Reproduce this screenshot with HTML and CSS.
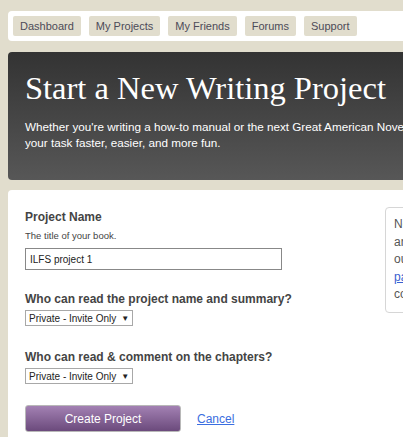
FILE: index.html
```html
<!DOCTYPE html>
<html>
<head>
<meta charset="utf-8">
<link rel="stylesheet" href="styles.css">
</head>
<body>
<div class="page">
  <nav class="nav">
    <a class="nav-btn" href="#">Dashboard</a>
    <a class="nav-btn" href="#">My Projects</a>
    <a class="nav-btn" href="#">My Friends</a>
    <a class="nav-btn" href="#">Forums</a>
    <a class="nav-btn" href="#">Support</a>
  </nav>
  <header class="hero">
    <h1 class="hero-title">Start a New Writing Project</h1>
    <p class="hero-text">Whether you're writing a how-to manual or the next Great American Novel, we'll help make<br>your task faster, easier, and more fun.</p>
  </header>
  <main class="panel">
    <form class="form">
      <div class="field">
        <label class="label">Project Name</label>
        <div class="hint">The title of your book.</div>
        <input class="text-input" type="text" value="ILFS project 1">
      </div>
      <div class="field field-select">
        <label class="label">Who can read the project name and summary?</label>
        <div class="select"><span>Private - Invite Only</span><span class="arrow">&#9660;</span></div>
      </div>
      <div class="field field-select">
        <label class="label">Who can read &amp; comment on the chapters?</label>
        <div class="select"><span>Private - Invite Only</span><span class="arrow">&#9660;</span></div>
      </div>
      <div class="actions">
        <button class="btn" type="button">Create Project</button>
        <a class="cancel" href="#">Cancel</a>
      </div>
    </form>
    <aside class="aside">
      New projects are private by default<br>
      and only the people you invite can<br>
      out who can see your work on the<br>
      <a class="aside-link" href="#">page settings</a> for each project<br>
      control it later.
    </aside>
  </main>
</div>
</body>
</html>
```
FILE: styles.css
```css
html, body {
  margin: 0;
  padding: 0;
  overflow: hidden;
}
body {
  background: #e1ddcd;
  font-family: "Liberation Sans", Arial, sans-serif;
  color: #444;
}
.page {
  width: 960px;
  padding: 11px 0 0 8px;
}
.nav {
  display: flex;
  gap: 8px;
  height: 30px;
  box-sizing: border-box;
  padding: 5px 5px;
  background: #fff;
  border-radius: 4px 0 0 4px;
}
.nav-btn {
  display: flex;
  align-items: center;
  height: 20px;
  padding: 0 7px;
  background: #e1ddcd;
  border-radius: 2px;
  color: #4d4b58;
  font-size: 11px;
  text-decoration: none;
}
.hero {
  margin-top: 11px;
  height: 128px;
  box-sizing: border-box;
  padding: 17px 0 0 17px;
  background: linear-gradient(#333333, #575757);
  border-radius: 4px 0 0 4px;
  color: #fff;
}
.hero-title {
  margin: 0;
  font-family: "Liberation Serif", Georgia, serif;
  font-weight: normal;
  font-size: 32.5px;
  line-height: 38px;
}
.hero-text {
  margin: 12px 0 0;
  font-size: 11.7px;
  line-height: 16px;
  white-space: nowrap;
}
.panel {
  margin-top: 10px;
  height: 400px;
  background: #fff;
  border-radius: 4px 0 0 0;
  display: flex;
  padding: 17px 0 0 17px;
  box-sizing: border-box;
}
.form {
  width: 360px;
  flex: none;
  padding-top: 3px;
}
.field {
  margin-bottom: 22px;
}
.field-select {
  margin-bottom: 24px;
}
.label {
  display: block;
  font-weight: bold;
  font-size: 12px;
  line-height: 14px;
  color: #444;
}
.hint {
  margin-top: 6px;
  font-size: 9.5px;
  line-height: 12px;
  color: #444;
}
.text-input {
  display: block;
  margin: 6px 0 0;
  width: 257px;
  height: 22px;
  box-sizing: border-box;
  border: 1px solid #888;
  padding: 0 4px;
  font-family: "Liberation Sans", Arial, sans-serif;
  font-size: 10px;
  color: #222;
  outline: none;
}
.select {
  margin-top: 4px;
  display: inline-flex;
  align-items: center;
  gap: 5px;
  height: 16px;
  box-sizing: border-box;
  border: 1px solid #a8a8a8;
  padding: 0 3px 0 3px;
  font-size: 10px;
  color: #222;
  background: #fff;
}
.arrow {
  font-size: 8px;
}
.actions {
  display: flex;
  align-items: center;
  gap: 16px;
  margin-top: -3px;
}
.btn {
  width: 156px;
  height: 27px;
  border: 1px solid #b8b8b8;
  border-radius: 3px;
  background: linear-gradient(#a381b3, #6b4a7c);
  color: #fff;
  font-family: "Liberation Sans", Arial, sans-serif;
  font-size: 12px;
  padding: 0;
}
.cancel {
  color: #3a6ee0;
  font-size: 12px;
}
.aside {
  align-self: flex-start;
  width: 220px;
  padding: 8px 8px 8px;
  border: 1px solid #d6d6d6;
  border-radius: 4px;
  font-size: 12px;
  line-height: 17.5px;
  color: #555;
  white-space: nowrap;
  overflow: hidden;
}
.aside-link {
  color: #3a5fd0;
}
```
